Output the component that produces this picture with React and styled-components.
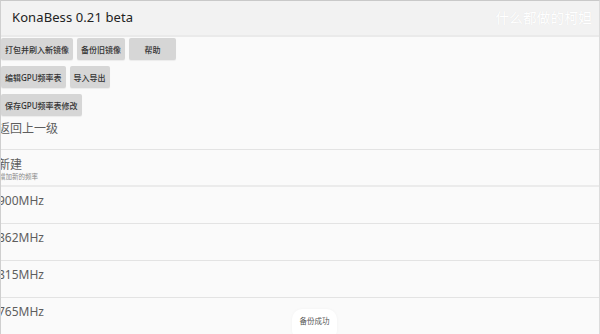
import styled, { createGlobalStyle } from 'styled-components';

const GlobalStyle = createGlobalStyle`
  html, body {
    margin: 0;
    padding: 0;
    background: #fafafa;
  }
  body {
    font-family: "Noto Sans", "Noto Sans CJK SC", sans-serif;
  }
`;

const freqs = ['900MHz', '862MHz', '815MHz', '765MHz'];

const App = () => {
  return (
    <Root>
      <GlobalStyle />
      <TopBar>
        <Title>KonaBess 0.21 beta</Title>
        <Watermark>什么都做的柯妲</Watermark>
      </TopBar>
      <Actions>
        <ButtonRow>
          <ActionButton>打包并刷入新镜像</ActionButton>
          <ActionButton>备份旧镜像</ActionButton>
          <ActionButton wide>帮助</ActionButton>
        </ButtonRow>
        <ButtonRow>
          <ActionButton>编辑GPU频率表</ActionButton>
          <ActionButton>导入导出</ActionButton>
        </ButtonRow>
        <ButtonRow>
          <ActionButton>保存GPU频率表修改</ActionButton>
        </ButtonRow>
      </Actions>
      <List>
        <BackRow>
          <ItemText>返回上一级</ItemText>
        </BackRow>
        <NewRow>
          <ItemText>新建</ItemText>
          <SubText>增加新的频率</SubText>
        </NewRow>
        {freqs.map(f => (
          <FreqRow key={f}>
            <ItemText>{f}</ItemText>
          </FreqRow>
        ))}
      </List>
      <Toast>备份成功</Toast>
    </Root>
  );
};

export default App;

const Root = styled.div`
  position: relative;
  width: 600px;
  height: 334px;
  box-sizing: border-box;
  border-top: 1px solid #c9c9c9;
  border-left: 1px solid #cfcfcf;
  border-right: 1px solid #dcdcdc;
  background: #fafafa;
  overflow: hidden;
  display: flex;
  flex-direction: column;
`;

const TopBar = styled.div`
  height: 32px;
  flex-shrink: 0;
  background: #f2f2f2;
  border-bottom: 2px solid #eaeaea;
  display: flex;
  align-items: center;
  justify-content: space-between;
  padding: 0 7px 2px 11px;
`;

const Title = styled.div`
  font-size: 13px;
  color: #222;
  letter-spacing: 0.1px;
`;

const Watermark = styled.div`
  font-size: 13.5px;
  color: #ffffff;
  letter-spacing: 0.3px;
  text-shadow: 0 0 1px rgba(0, 0, 0, 0.08);
`;

const Actions = styled.div`
  display: flex;
  flex-direction: column;
  gap: 6px;
  padding-top: 1px;
`;

const ButtonRow = styled.div`
  display: flex;
  gap: 4px;
`;

const ActionButton = styled.div`
  height: 22px;
  min-width: ${({ wide }) => (wide ? '47px' : 'auto')};
  box-sizing: border-box;
  padding: 0 4px;
  background: #d6d6d6;
  border-radius: 2px;
  box-shadow: 0 1px 1px rgba(0, 0, 0, 0.06);
  display: flex;
  align-items: center;
  justify-content: center;
  font-size: 8px;
  font-weight: 500;
  color: #333;
  white-space: nowrap;
`;

const List = styled.div`
  display: flex;
  flex-direction: column;
`;

const Row = styled.div`
  box-sizing: border-box;
  display: flex;
  flex-direction: column;
  margin-left: -3px;
`;

const BackRow = styled(Row)`
  height: 34px;
  padding-top: 3px;
  border-bottom: 1px solid #e3e3e3;
`;

const NewRow = styled(Row)`
  height: 37px;
  padding-top: 5px;
  border-bottom: 2px solid #ebebeb;
`;

const FreqRow = styled(Row)`
  height: 37px;
  padding-top: 4px;
  border-bottom: 1px solid #e3e3e3;
`;

const ItemText = styled.div`
  font-size: 12px;
  line-height: 20px;
  color: #5e5e5e;
`;

const SubText = styled.div`
  font-size: 6.5px;
  line-height: 8px;
  color: #888;
  margin-top: -2px;
  margin-left: 1px;
`;

const Toast = styled.div`
  position: absolute;
  left: 291px;
  bottom: -6px;
  width: 45px;
  height: 31px;
  box-sizing: border-box;
  padding-bottom: 8px;
  background: #ffffff;
  border-radius: 10px;
  display: flex;
  align-items: center;
  justify-content: center;
  font-size: 7.5px;
  color: #555;
  box-shadow: 0 0 3px rgba(0, 0, 0, 0.04);
`;
